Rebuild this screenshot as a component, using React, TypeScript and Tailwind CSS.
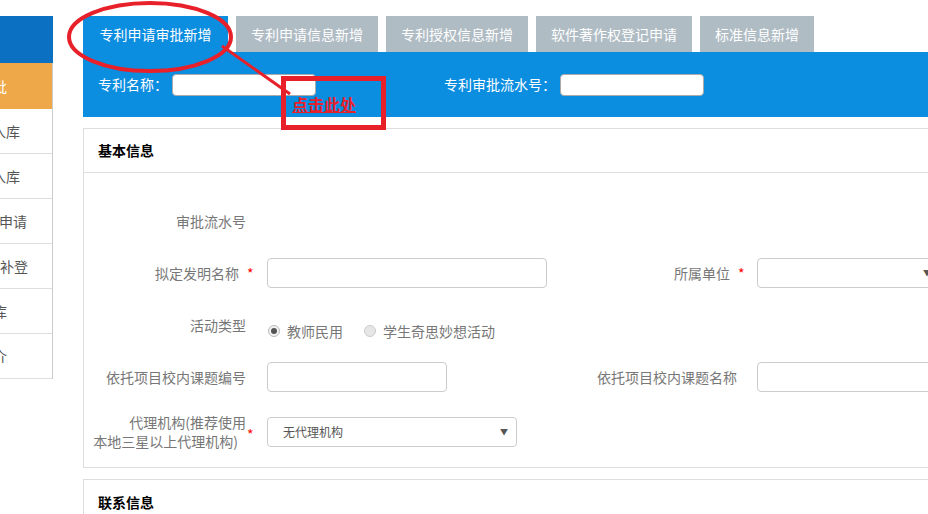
import React from "react";

const FONT = {
  fontFamily: '"Microsoft YaHei", "Noto Sans CJK SC", "Noto Sans", sans-serif',
};

const sideItems = [
  { text: "专利入库", pr: "pr-[32px]" },
  { text: "软著入库", pr: "pr-[32px]" },
  { text: "专利申请", pr: "pr-[25px]" },
  { text: "专利补登", pr: "pr-[24px]" },
  { text: "标准库", pr: "pr-[45px]" },
  { text: "简介", pr: "pr-[45px]" },
];

const tabs = [
  { name: "专利申请审批新增", w: "w-[145px]", active: true },
  { name: "专利申请信息新增", w: "w-[142px]", active: false },
  { name: "专利授权信息新增", w: "w-[142px]", active: false },
  { name: "软件著作权登记申请", w: "w-[156px]", active: false },
  { name: "标准信息新增", w: "w-[114px]", active: false },
];

const Label: React.FC<{ text: string; required?: boolean }> = ({ text, required }) => (
  <div className="w-[170px] shrink-0 flex justify-end items-center text-[14px] text-[#777]">
    {required ? (
      <>
        <span>{text}</span>
        <span className="ml-[8px] w-[7px] text-[#f00] text-[14px] leading-none">*</span>
      </>
    ) : (
      <span className="pr-[8px]">{text}</span>
    )}
  </div>
);

const TextInput: React.FC<{ w: string }> = ({ w }) => (
  <div className={`${w} h-[30px] shrink-0 border border-[#ccc] rounded-[4px] bg-white`} />
);

const Radio: React.FC<{ checked?: boolean; label: string }> = ({ checked, label }) => (
  <div className="flex items-center">
    <div
      className={`w-[12px] h-[12px] rounded-full border flex items-center justify-center ${
        checked ? "border-[#bbb] bg-[#f2f2f2]" : "border-[#ccc] bg-[#e6e6e6]"
      }`}
    >
      {checked && <div className="w-[6px] h-[6px] rounded-full bg-[#555]" />}
    </div>
    <span className="ml-[7px] text-[14px] text-[#777]">{label}</span>
  </div>
);

export default function App() {
  return (
    <div className="relative w-[928px] h-[514px] overflow-hidden bg-white flex" style={FONT}>
      {/* sidebar */}
      <div className="w-[53px] shrink-0 pt-[16px] flex flex-col">
        <div className="h-[47px] bg-[#0b6fc2]" />
        <div className="border-r border-[#ccc] flex flex-col">
          <div className="h-[46px] bg-[#eea84a] flex items-center justify-end overflow-hidden pr-[45px] text-white text-[14px] whitespace-nowrap">
            专利审批
          </div>
          {sideItems.map((it) => (
            <div
              key={it.text}
              className={`h-[45px] border-b border-[#ddd] flex items-center justify-end overflow-hidden whitespace-nowrap text-[14px] text-[#555] ${it.pr}`}
            >
              {it.text}
            </div>
          ))}
        </div>
      </div>

      {/* main */}
      <div className="ml-[30px] w-[1000px] shrink-0 pt-[16px]">
        <div className="flex gap-[8px] h-[36px]">
          {tabs.map((t) => (
            <div
              key={t.name}
              className={`${t.w} h-[36px] flex items-center justify-center text-white text-[14px] ${
                t.active ? "bg-[#0b8de0]" : "bg-[#b0bcc4]"
              }`}
            >
              {t.name}
            </div>
          ))}
        </div>

        <div className="h-[65px] bg-[#0b8de0] flex items-center pl-[15px] text-white text-[14px]">
          <span>专利名称：</span>
          <div className="ml-[4px] w-[144px] h-[22px] bg-white border border-[#aaa] rounded-[4px]" />
          <span className="ml-[128px]">专利审批流水号：</span>
          <div className="ml-[4px] w-[144px] h-[22px] bg-white border border-[#aaa] rounded-[4px]" />
        </div>

        {/* 基本信息 */}
        <div className="mt-[11px] border border-[#ddd]">
          <div className="h-[44px] flex items-center px-[14px] border-b border-[#ddd] text-[14px] font-bold text-black">
            基本信息
          </div>
          <div className="pt-[34px] pb-[20px]">
            <div className="flex h-[29px]">
              <Label text="审批流水号" />
            </div>

            <div className="flex mt-[22px] h-[30px]">
              <div className="w-[491px] flex items-center">
                <Label text="拟定发明名称" required />
                <div className="ml-[13px]">
                  <TextInput w="w-[280px]" />
                </div>
              </div>
              <div className="flex items-center">
                <Label text="所属单位" required />
                <div className="ml-[12px] w-[183px] h-[30px] border border-[#ccc] rounded-[4px] flex items-center justify-end pr-[8px]">
                  <span className="text-[8px] text-[#555]">▼</span>
                </div>
              </div>
            </div>

            <div className="flex mt-[27px] h-[32px] items-start">
              <div className="w-[170px] shrink-0 flex justify-end text-[14px] text-[#777] leading-[20px]">
                <span className="pr-[8px]">活动类型</span>
              </div>
              <div className="ml-[14px] mt-[6px] h-[20px] flex items-center gap-[21px]">
                <Radio checked label="教师民用" />
                <Radio label="学生奇思妙想活动" />
              </div>
            </div>

            <div className="flex mt-[15px] h-[30px]">
              <div className="w-[491px] flex items-center">
                <Label text="依托项目校内课题编号" />
                <div className="ml-[13px]">
                  <TextInput w="w-[180px]" />
                </div>
              </div>
              <div className="flex items-center">
                <Label text="依托项目校内课题名称" />
                <div className="ml-[12px]">
                  <TextInput w="w-[280px]" />
                </div>
              </div>
            </div>

            <div className="flex mt-[25px] h-[30px] items-center">
              <div className="w-[170px] shrink-0 flex justify-end items-center text-[14px] text-[#777] leading-[19px]">
                <div className="text-right whitespace-nowrap">
                  <div>代理机构(推荐使用</div>
                  <div className="pr-[8px]">本地三星以上代理机构)</div>
                </div>
                <span className="ml-[1px] w-[7px] text-[#f00] mt-[4px]">*</span>
              </div>
              <div className="ml-[13px] w-[250px] h-[30px] border border-[#ccc] rounded-[4px] flex items-center justify-between pl-[15px] pr-[8px]">
                <span className="text-[12px] text-[#555]">无代理机构</span>
                <span className="text-[8px] text-[#555]">▼</span>
              </div>
            </div>
          </div>
        </div>

        {/* 联系信息 */}
        <div className="mt-[11px] border border-[#ddd]">
          <div className="h-[44px] flex items-center px-[14px] text-[14px] font-bold text-black">
            联系信息
          </div>
        </div>
      </div>

      {/* red annotations drawn over the page */}
      <svg className="absolute inset-0 pointer-events-none" width="928" height="514" viewBox="0 0 928 514">
        <ellipse cx="150" cy="37" rx="81" ry="34" fill="none" stroke="#e8202a" strokeWidth="4" />
        <line x1="222" y1="46" x2="290" y2="94" stroke="#e8202a" strokeWidth="3" />
        <rect x="283.5" y="78.5" width="100" height="49" fill="none" stroke="#e8202a" strokeWidth="5" />
      </svg>
      <span className="absolute left-[292px] top-[93px] text-[16px] leading-[22px] font-bold text-[#e8202a] underline">
        点击此处
      </span>
    </div>
  );
}
